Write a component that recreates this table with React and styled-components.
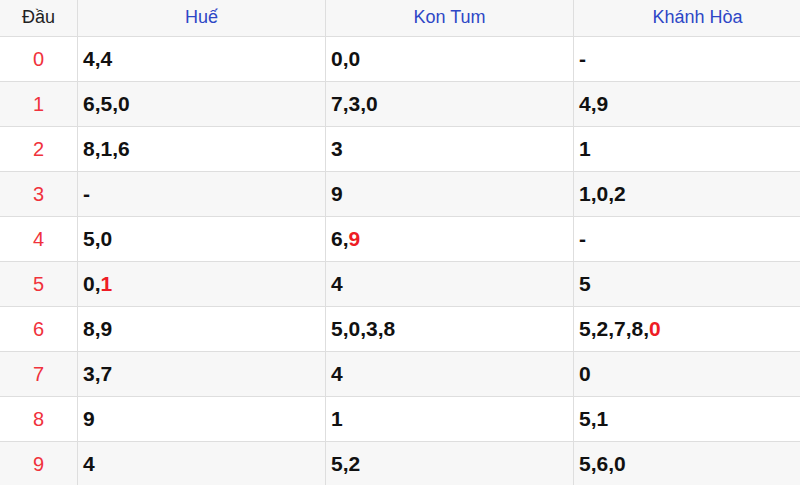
import React from "react";
import styled, { createGlobalStyle } from "styled-components";

const rows = [
  ["0", ["4,4"], ["0,0"], ["-"]],
  ["1", ["6,5,0"], ["7,3,0"], ["4,9"]],
  ["2", ["8,1,6"], ["3"], ["1"]],
  ["3", ["-"], ["9"], ["1,0,2"]],
  ["4", ["5,0"], ["6,", "9"], ["-"]],
  ["5", ["0,", "1"], ["4"], ["5"]],
  ["6", ["8,9"], ["5,0,3,8"], ["5,2,7,8,", "0"]],
  ["7", ["3,7"], ["4"], ["0"]],
  ["8", ["9"], ["1"], ["5,1"]],
  ["9", ["4"], ["5,2"], ["5,6,0"]],
];

function Loto() {
  return (
    <Table>
      <HeadCell>
        <span>Đầu</span>
      </HeadCell>
      <HeadCell $blue>Huế</HeadCell>
      <HeadCell $blue>Kon Tum</HeadCell>
      <HeadCell $blue>Khánh Hòa</HeadCell>
      {rows.map(([head, ...cols], i) => (
        <React.Fragment key={head}>
          <HeadNum $odd={i % 2 === 1}>{head}</HeadNum>
          {cols.map(([plain, hot], j) => (
            <Cell key={j} $odd={i % 2 === 1}>
              {plain}
              {hot && <Hot>{hot}</Hot>}
            </Cell>
          ))}
        </React.Fragment>
      ))}
    </Table>
  );
}

export default function App() {
  return (
    <>
      <GlobalStyle />
      <Page>
        <Loto />
      </Page>
    </>
  );
}

const GlobalStyle = createGlobalStyle`
  html, body {
    margin: 0;
    background: #fff;
    overflow: hidden;
  }
`;

const Page = styled.div`
  width: 800px;
  height: 485px;
  overflow: hidden;
  font-family: "Liberation Sans", Arial, sans-serif;
`;

const Table = styled.div`
  display: grid;
  grid-template-columns: 78px 248px 248px 248px;
  grid-template-rows: 37px repeat(10, 45px);
  width: 822px;
`;

const BaseCell = styled.div`
  box-sizing: border-box;
  border-right: 1px solid #dedede;
  border-bottom: 1px solid #dedede;
  display: flex;
  align-items: center;
  background: ${(p) => (p.$odd ? "#f7f7f7" : "#fff")};
`;

const HeadCell = styled(BaseCell)`
  justify-content: center;
  background: #f7f7f7;
  font-size: 18px;
  color: ${(p) => (p.$blue ? "#2e47c6" : "#222")};
  padding-bottom: 1px;
`;

const HeadNum = styled(BaseCell)`
  justify-content: center;
  font-size: 20px;
  color: #f0323c;
`;

const Cell = styled(BaseCell)`
  padding-left: 5px;
  font-size: 21px;
  font-weight: bold;
  color: #111;
`;

const Hot = styled.span`
  color: #ee1c25;
`;
